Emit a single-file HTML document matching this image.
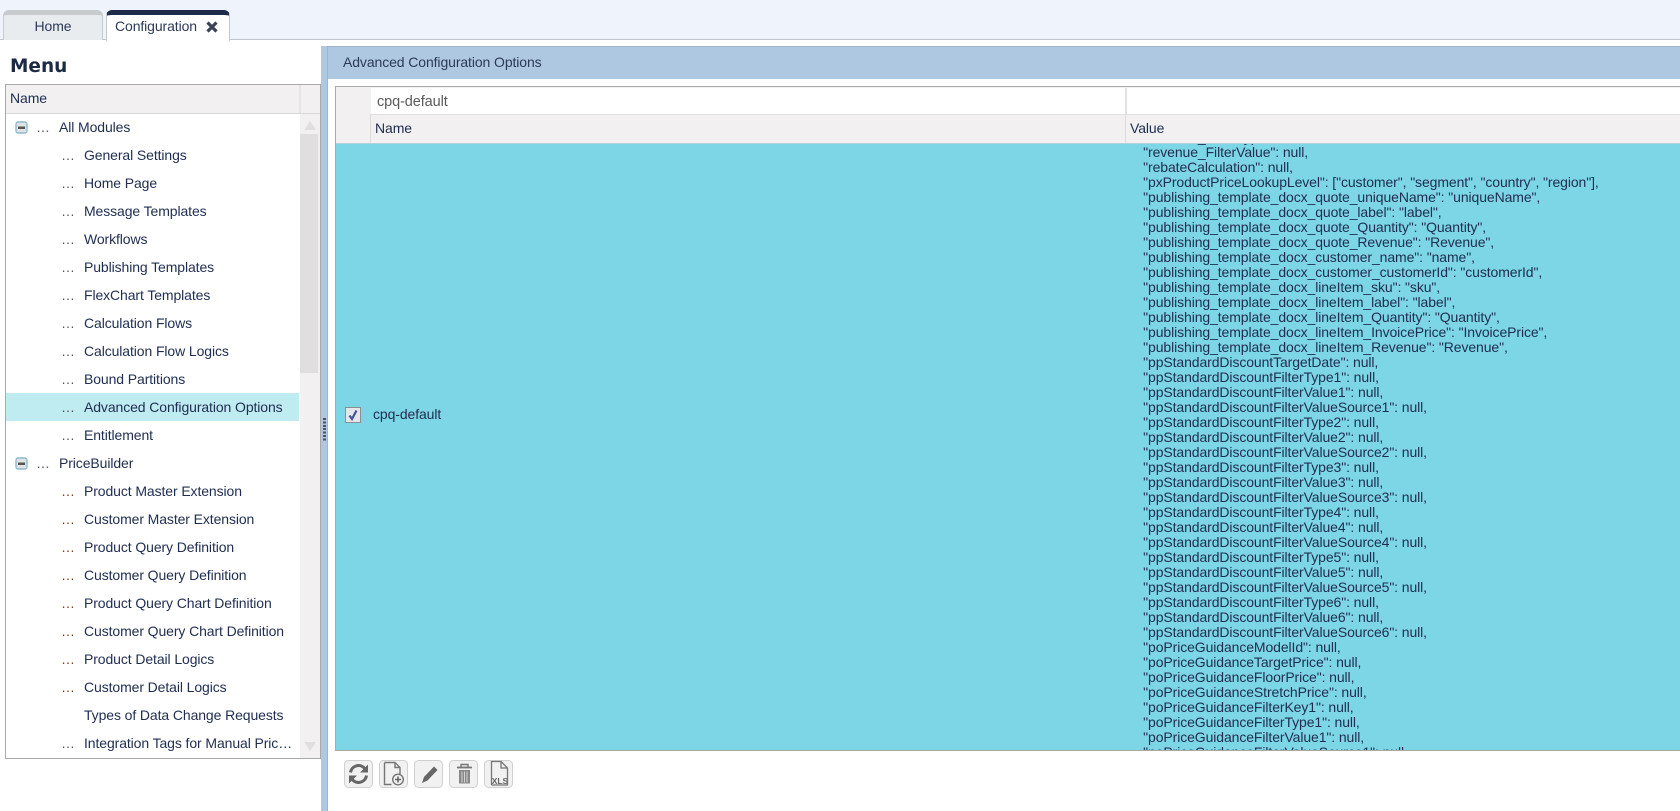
<!DOCTYPE html>
<html><head><meta charset="utf-8"><style>
html,body{margin:0;padding:0;width:1680px;height:811px;overflow:hidden;background:#fff;font-family:"Liberation Sans",sans-serif;font-size:14px;color:#1f2d50;letter-spacing:-.1px}
.a{position:absolute;white-space:nowrap}
.row{position:absolute;height:28px;line-height:28px;white-space:nowrap}
pre{margin:0;font:14px/15px "Liberation Sans",sans-serif;color:#1f2d50}
pre.a{white-space:pre}
</style></head><body>
<div class="a" style="left:0;top:0;width:1680px;height:39px;background:#eff4fc;border-bottom:1px solid #c2c6cf"></div>
<div class="a" style="left:3px;top:10px;height:30px;background:#e8ecef;border:1px solid #c8cbce;border-top:5px solid #c8cbce;border-bottom:none;border-radius:6px 6px 0 0;box-sizing:border-box;width:100px;text-align:center;line-height:22px;color:#2c3a56">Home</div>
<div class="a" style="left:106px;top:10px;width:124px;height:31px;background:#fff;border:1px solid #c2c6cf;border-top:5px solid #1d2a4a;border-bottom:none;border-radius:6px 6px 0 0;box-sizing:border-box;line-height:22px;padding-left:8px;color:#2c3a56">Configuration</div>
<svg class="a" style="left:205px;top:20px" width="14" height="14"><path d="M2.5 2.5L11.5 11.5M11.5 2.5L2.5 11.5" stroke="#3a4258" stroke-width="3.2"/></svg>
<div class="a" style="left:10px;top:54.5px;font:bold 18.5px 'DejaVu Sans',sans-serif;color:#1d2a44;line-height:24px;letter-spacing:0">Menu</div>

<div class="a" style="left:5px;top:84px;width:316px;height:675px;border:1px solid #a9a9a9;box-sizing:border-box;background:#fff;overflow:hidden">
 <div class="a" style="left:0;top:0;width:314px;height:29px;background:#f2f0f1;border-bottom:1px solid #d8d8d8;line-height:27px;padding-left:4px;box-sizing:border-box">Name</div>
 <div class="a" style="left:293px;top:0;width:2px;height:28px;background:#e4e4e4"></div>
 <div class="a" style="left:294px;top:29px;width:20px;height:644px;background:#f2f0f1"></div>
 <div class="a" style="left:294px;top:49px;width:18px;height:239px;background:#e0dede"></div>
 <svg class="a" style="left:297px;top:35px" width="14" height="10"><path d="M1 10L7 1L13 10Z" fill="#e0dede"/></svg>
 <svg class="a" style="left:297px;top:657px" width="14" height="10"><path d="M1 0L7 9L13 0Z" fill="#e0dede"/></svg>
 <div class="a" style="left:0;top:308px;width:293px;height:28px;background:#bfecf0"></div>
</div>
<div id="tree">
<svg class="a" style="left:15px;top:121px" width="13" height="13"><rect x="1" y="1" width="11" height="11" rx="2" fill="#dfe3e6" stroke="#8fb9d0" stroke-width="1.4"/><rect x="3" y="5.5" width="7" height="2.5" fill="#555"/></svg>
<div class="row" style="left:36px;top:113px;color:#555">…</div><div class="row" style="left:59px;top:113px">All Modules</div>
<div class="row" style="left:61px;top:141px;color:#555">…</div><div class="row" style="left:84px;top:141px">General Settings</div>
<div class="row" style="left:61px;top:169px;color:#555">…</div><div class="row" style="left:84px;top:169px">Home Page</div>
<div class="row" style="left:61px;top:197px;color:#555">…</div><div class="row" style="left:84px;top:197px">Message Templates</div>
<div class="row" style="left:61px;top:225px;color:#555">…</div><div class="row" style="left:84px;top:225px">Workflows</div>
<div class="row" style="left:61px;top:253px;color:#555">…</div><div class="row" style="left:84px;top:253px">Publishing Templates</div>
<div class="row" style="left:61px;top:281px;color:#555">…</div><div class="row" style="left:84px;top:281px">FlexChart Templates</div>
<div class="row" style="left:61px;top:309px;color:#555">…</div><div class="row" style="left:84px;top:309px">Calculation Flows</div>
<div class="row" style="left:61px;top:337px;color:#555">…</div><div class="row" style="left:84px;top:337px">Calculation Flow Logics</div>
<div class="row" style="left:61px;top:365px;color:#555">…</div><div class="row" style="left:84px;top:365px">Bound Partitions</div>
<div class="row" style="left:61px;top:393px;color:#555">…</div><div class="row" style="left:84px;top:393px">Advanced Configuration Options</div>
<div class="row" style="left:61px;top:421px;color:#555">…</div><div class="row" style="left:84px;top:421px">Entitlement</div>
<svg class="a" style="left:15px;top:457px" width="13" height="13"><rect x="1" y="1" width="11" height="11" rx="2" fill="#dfe3e6" stroke="#8fb9d0" stroke-width="1.4"/><rect x="3" y="5.5" width="7" height="2.5" fill="#555"/></svg>
<div class="row" style="left:36px;top:449px;color:#555">…</div><div class="row" style="left:59px;top:449px">PriceBuilder</div>
<div class="row" style="left:61px;top:477px;color:#7a3a20">…</div><div class="row" style="left:84px;top:477px">Product Master Extension</div>
<div class="row" style="left:61px;top:505px;color:#7a3a20">…</div><div class="row" style="left:84px;top:505px">Customer Master Extension</div>
<div class="row" style="left:61px;top:533px;color:#7a3a20">…</div><div class="row" style="left:84px;top:533px">Product Query Definition</div>
<div class="row" style="left:61px;top:561px;color:#7a3a20">…</div><div class="row" style="left:84px;top:561px">Customer Query Definition</div>
<div class="row" style="left:61px;top:589px;color:#7a3a20">…</div><div class="row" style="left:84px;top:589px">Product Query Chart Definition</div>
<div class="row" style="left:61px;top:617px;color:#7a3a20">…</div><div class="row" style="left:84px;top:617px">Customer Query Chart Definition</div>
<div class="row" style="left:61px;top:645px;color:#7a3a20">…</div><div class="row" style="left:84px;top:645px">Product Detail Logics</div>
<div class="row" style="left:61px;top:673px;color:#7a3a20">…</div><div class="row" style="left:84px;top:673px">Customer Detail Logics</div>
<div class="row" style="left:84px;top:701px">Types of Data Change Requests</div>
<div class="row" style="left:61px;top:729px;color:#555">…</div><div class="row" style="left:84px;top:729px">Integration Tags for Manual Pric…</div>
</div>

<div class="a" style="left:321px;top:46px;width:6px;height:765px;background:#afc8e1;border-right:1px solid #a9b2bd"></div>
<div class="a" style="left:323px;top:418px;width:3px;height:24px;background:repeating-linear-gradient(#4a5568 0 2px,transparent 2px 3.4px)"></div>
<div class="a" style="left:328px;top:46px;width:1352px;height:33px;background:#afc8e1;border-top:1px solid #9fb3c9;box-sizing:border-box;line-height:30px;padding-left:15px;color:#2c3a56">Advanced Configuration Options</div>

<div class="a" style="left:335px;top:86px;width:1345px;height:665px;border:1px solid #a9a9a9;border-right:none;box-sizing:border-box;background:#f2f0f1;overflow:hidden">
 <div class="a" style="left:35px;top:1px;width:756px;height:26px;background:#fff;border-right:2px solid #e2e2e2;box-sizing:border-box;line-height:29px;padding-left:6px;color:#5a5a5a;font-size:14.5px">cpq-default</div>
 <div class="a" style="left:791px;top:1px;width:554px;height:26px;background:#fff"></div>
 <div class="a" style="left:34px;top:27px;width:1311px;height:1px;background:#e0e0e0"></div>
 <div class="a" style="left:34px;top:27px;width:1px;height:29px;background:#dcdcdc"></div>
 <div class="a" style="left:789px;top:27px;width:1px;height:29px;background:#dcdcdc"></div>
 <div class="a" style="left:39px;top:27px;line-height:28px">Name</div>
 <div class="a" style="left:794px;top:27px;line-height:28px">Value</div>
 <div class="a" style="left:0;top:56px;width:1345px;height:607px;background:#7dd6e6;border-top:1px solid #b5cfd6;box-sizing:border-box;overflow:hidden">
  <pre class="a" style="left:792px;top:-14px;letter-spacing:-.1px">    "revenue_FilterType": null,
    "revenue_FilterValue": null,
    "rebateCalculation": null,
    "pxProductPriceLookupLevel": ["customer", "segment", "country", "region"],
    "publishing_template_docx_quote_uniqueName": "uniqueName",
    "publishing_template_docx_quote_label": "label",
    "publishing_template_docx_quote_Quantity": "Quantity",
    "publishing_template_docx_quote_Revenue": "Revenue",
    "publishing_template_docx_customer_name": "name",
    "publishing_template_docx_customer_customerId": "customerId",
    "publishing_template_docx_lineItem_sku": "sku",
    "publishing_template_docx_lineItem_label": "label",
    "publishing_template_docx_lineItem_Quantity": "Quantity",
    "publishing_template_docx_lineItem_InvoicePrice": "InvoicePrice",
    "publishing_template_docx_lineItem_Revenue": "Revenue",
    "ppStandardDiscountTargetDate": null,
    "ppStandardDiscountFilterType1": null,
    "ppStandardDiscountFilterValue1": null,
    "ppStandardDiscountFilterValueSource1": null,
    "ppStandardDiscountFilterType2": null,
    "ppStandardDiscountFilterValue2": null,
    "ppStandardDiscountFilterValueSource2": null,
    "ppStandardDiscountFilterType3": null,
    "ppStandardDiscountFilterValue3": null,
    "ppStandardDiscountFilterValueSource3": null,
    "ppStandardDiscountFilterType4": null,
    "ppStandardDiscountFilterValue4": null,
    "ppStandardDiscountFilterValueSource4": null,
    "ppStandardDiscountFilterType5": null,
    "ppStandardDiscountFilterValue5": null,
    "ppStandardDiscountFilterValueSource5": null,
    "ppStandardDiscountFilterType6": null,
    "ppStandardDiscountFilterValue6": null,
    "ppStandardDiscountFilterValueSource6": null,
    "poPriceGuidanceModelId": null,
    "poPriceGuidanceTargetPrice": null,
    "poPriceGuidanceFloorPrice": null,
    "poPriceGuidanceStretchPrice": null,
    "poPriceGuidanceFilterKey1": null,
    "poPriceGuidanceFilterType1": null,
    "poPriceGuidanceFilterValue1": null,
    "poPriceGuidanceFilterValueSource1": null,</pre>
  <div class="a" style="left:9px;top:263px;width:16px;height:16px;background:#e4e6ea;border:1px solid #8a8f96;box-sizing:border-box"></div>
  <svg class="a" style="left:9px;top:263px" width="16" height="16"><path d="M4.5 8.5L7 12L11.5 3.5" fill="none" stroke="#41559c" stroke-width="2.2"/></svg>
  <div class="a" style="left:37px;top:256px;line-height:28px">cpq-default</div>
 </div>
</div>

<svg class="a" style="left:340px;top:755px" width="180" height="36" viewBox="0 0 180 36" fill="none">
 <g fill="#f1f1f1" stroke="#d0d0d0"><rect x="4.5" y="5.5" width="28" height="27" rx="4"/><rect x="39.5" y="5.5" width="28" height="27" rx="4"/><rect x="74.5" y="5.5" width="28" height="27" rx="4"/><rect x="109.5" y="5.5" width="28" height="27" rx="4"/><rect x="144.5" y="5.5" width="28" height="27" rx="4"/></g>
 <g stroke="#666" stroke-width="3"><path d="M10.5 17.5A8 8 0 0 1 25 14"/><path d="M26.5 20.5A8 8 0 0 1 12 24"/></g>
 <path d="M28 9.5V17.5H20Z M9 28.5V20.5H17Z" fill="#666"/>
 <path d="M44.5 7.5H55L60 12.5V19M55 7.5V12.5H60M44.5 7.5V29.5H51.5" stroke="#777" stroke-width="1.4"/>
 <circle cx="58" cy="24.5" r="5.3" fill="#f1f1f1" stroke="#777" stroke-width="1.4"/><path d="M55 24.5H61M58 21.5V27.5" stroke="#666" stroke-width="1.6"/>
 <path d="M82 28L84 22L94 11.5L97.5 15L87.5 25.5Z" fill="#666"/>
 <path d="M117 12.5H132" stroke="#777" stroke-width="1.8"/><path d="M121 12V9.5H128V12" stroke="#777" stroke-width="1.4"/>
 <path d="M119 15H130V28.5H119Z" fill="#888"/><path d="M122 16.5V27.5M124.5 16.5V27.5M127 16.5V27.5" stroke="#ddd" stroke-width=".9"/>
 <path d="M151.5 30V6.5H161L167.5 13V30H151.5M161 6.5V13H167.5" stroke="#777" stroke-width="1.3"/>
 <text x="151.7" y="29" font-family="Liberation Sans" font-size="8.5" font-weight="bold" fill="#666" letter-spacing="0">XLS</text>
</svg>
</body></html>
